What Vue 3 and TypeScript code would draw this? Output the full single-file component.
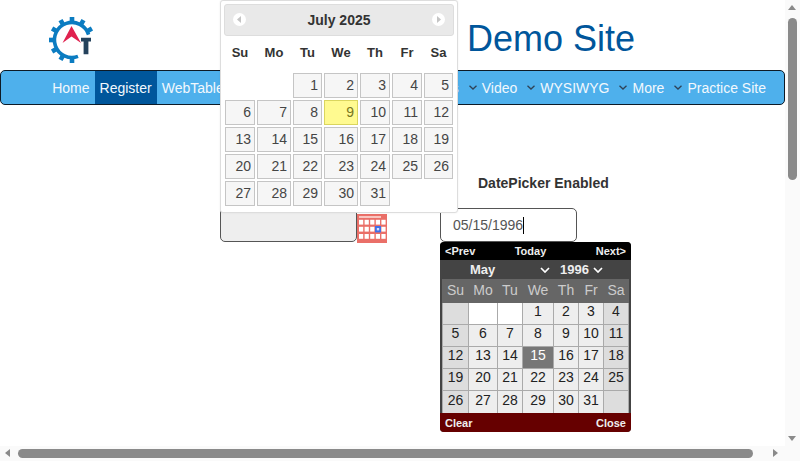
<script setup lang="ts">
type Day = { n: number | null }

const navItems = [
  { label: 'Home' },
  { label: 'Register', active: true },
  { label: 'WebTable' },
  { label: 'SwitchTo' },
  { label: 'Widgets', drop: true },
  { label: 'Interactions', drop: true },
  { label: 'Video', drop: true },
  { label: 'WYSIWYG', drop: true },
  { label: 'More', drop: true },
  { label: 'Practice Site', drop: true },
]

const gearTeeth = [0, 30, 60, 180, 210, 240, 270, 300, 330]

const weekdays = ['Su', 'Mo', 'Tu', 'We', 'Th', 'Fr', 'Sa']

function monthCells(offset: number, count: number): Day[] {
  const cells: Day[] = []
  for (let i = 0; i < offset; i++) cells.push({ n: null })
  for (let i = 1; i <= count; i++) cells.push({ n: i })
  while (cells.length % 7) cells.push({ n: null })
  return cells
}

const julyDays = monthCells(2, 31)
const mayDays = monthCells(3, 31)

function mayClass(d: Day, i: number) {
  const weekend = i % 7 === 0 || i % 7 === 6
  return {
    weekend,
    blank: d.n === null && !weekend && i < 7,
    'filler-end': d.n === null && i >= 7,
    current: d.n === 15,
  }
}

const iconCols = [2, 7.6, 13.2, 18.8, 24.4]
const iconRows = [5.8, 12.8, 20]
const iconCells = iconRows
  .flatMap((y, r) => iconCols.map((x, c) => ({ x, y, on: r === 1 && c === 3 })))
  .filter((c) => !c.on)
</script>

<template>
  <div class="window">
    <div class="viewport">
      <header class="top">
        <svg class="logo" width="48" height="52" viewBox="48 14 48 52">
          <path class="ring" d="M 78 56.4 A 17.5 17.5 0 1 1 88.6 34.6" />
          <rect
            v-for="a in gearTeeth"
            :key="a"
            x="69.7"
            y="17"
            width="4.6"
            height="5"
            fill="#0b7cc1"
            :transform="`rotate(${a} 72 40)`"
          />
          <path d="M71.5 26 L81 43 L71.5 36.5 L62.5 43 Z" fill="#e0224f" />
          <path d="M81 37.7 H91 V41.6 H88.4 V54.2 H83.6 V41.6 H81 Z" fill="#24425c" />
        </svg>
        <h1 class="site-title">Demo Site</h1>
      </header>

      <nav class="navbar">
        <a v-for="item in navItems" :key="item.label" class="nav-item" :class="{ active: item.active }">
          <svg v-if="item.drop" class="nav-chevron" width="8" height="5" viewBox="0 0 8 5">
            <path d="M0.5 0.7 L4 4 L7.5 0.7" fill="none" stroke="#2f4358" stroke-width="1.3" />
          </svg>
          {{ item.label }}
        </a>
      </nav>

      <main class="content">
        <div class="field-left">
          <div class="input-disabled"></div>
          <svg class="cal-icon" width="30" height="29" viewBox="0 0 30 29">
            <defs>
              <filter id="soft" x="-10%" y="-10%" width="120%" height="120%">
                <feGaussianBlur stdDeviation="0.6" />
              </filter>
            </defs>
            <rect width="30" height="29" fill="#ea6f68" />
            <g filter="url(#soft)">
              <rect x="2" y="2" width="22" height="2" fill="#f8c6c0" />
              <rect
                v-for="(c, i) in iconCells"
                :key="i"
                :x="c.x"
                :y="c.y"
                width="4.2"
                height="4.8"
                fill="#fff"
              />
              <rect x="18" y="12" width="6" height="6.4" fill="#3f6fe8" />
              <rect x="19.8" y="14" width="2.4" height="2.4" fill="#d5e1fc" />
            </g>
          </svg>
        </div>

        <div class="field-right">
          <label class="field-label">DatePicker Enabled</label>
          <div class="input-date">05/15/1996<span class="caret"></span></div>

          <div class="dark-cal">
            <div class="dark-bar">
              <span>&lt;Prev</span><span class="today-link">Today</span><span>Next&gt;</span>
            </div>
            <div class="dark-select">
              <span class="sel-month">May</span>
              <svg class="sel-arrow month-arrow" width="10" height="6" viewBox="0 0 10 6">
                <path d="M1 1 L5 5 L9 1" fill="none" stroke="#fff" stroke-width="1.7" />
              </svg>
              <span class="sel-year">1996</span>
              <svg class="sel-arrow" width="10" height="6" viewBox="0 0 10 6">
                <path d="M1 1 L5 5 L9 1" fill="none" stroke="#fff" stroke-width="1.7" />
              </svg>
            </div>
            <div class="dark-grid dark-head">
              <span v-for="w in weekdays" :key="w">{{ w }}</span>
            </div>
            <div class="dark-grid dark-days">
              <span v-for="(d, i) in mayDays" :key="i" class="dark-day" :class="mayClass(d, i)">{{ d.n }}</span>
            </div>
            <div class="dark-foot"><span>Clear</span><span>Close</span></div>
          </div>
        </div>
      </main>

      <div class="ui-cal">
        <div class="ui-head">
          <span class="ui-arrow">
            <svg width="13" height="13" viewBox="0 0 13 13"><path d="M8 3 L4 6.5 L8 10 Z" fill="#c4c4c4" /></svg>
          </span>
          <span class="ui-title">July 2025</span>
          <span class="ui-arrow">
            <svg width="13" height="13" viewBox="0 0 13 13"><path d="M5 3 L9 6.5 L5 10 Z" fill="#c4c4c4" /></svg>
          </span>
        </div>
        <div class="ui-grid">
          <span v-for="w in weekdays" :key="w" class="ui-week">{{ w }}</span>
          <template v-for="(d, i) in julyDays" :key="i">
            <span v-if="d.n" class="ui-day" :class="{ today: d.n === 9 }">{{ d.n }}</span>
            <span v-else></span>
          </template>
        </div>
      </div>
    </div>

    <div class="scroll-v">
      <i class="tri tri-up"></i>
      <div class="thumb-v"></div>
      <i class="tri tri-down"></i>
    </div>
    <div class="scroll-h">
      <i class="tri tri-left"></i>
      <div class="thumb-h"></div>
      <i class="tri tri-right"></i>
    </div>
    <div class="scroll-corner"></div>
  </div>
</template>

<style scoped>
.window {
  width: 800px;
  height: 461px;
  overflow: hidden;
  display: grid;
  grid-template-columns: 785px 15px;
  grid-template-rows: 446px 15px;
  font-family: 'Liberation Sans', Arial, sans-serif;
  font-size: 14px;
  color: #333;
  background: #fff;
}

.viewport {
  position: relative;
  overflow: hidden;
}

.top {
  height: 70px;
  display: flex;
  align-items: flex-start;
  padding: 14px 0 0 48px;
  box-sizing: border-box;
}

.logo {
  display: block;
  flex: none;
}

.ring {
  fill: none;
  stroke: #0b7cc1;
  stroke-width: 3.6;
}

.site-title {
  margin: 3px 0 0 371px;
  font-size: 36px;
  font-weight: 400;
  line-height: 44px;
  color: #00569b;
  white-space: nowrap;
}

.navbar {
  height: 35px;
  box-sizing: border-box;
  display: flex;
  align-items: stretch;
  padding-left: 46.2px;
  background: #4eb0ec;
  border: 1px solid #0d1a26;
  border-radius: 5px;
}

.nav-item {
  display: flex;
  align-items: center;
  gap: 5px;
  padding: 0 5px;
  color: #f2f8fd;
  white-space: nowrap;
}

.nav-item.active {
  background: #00569b;
}

.nav-chevron {
  flex: none;
}

.content {
  display: flex;
  align-items: flex-end;
  padding: 70px 0 0 220px;
}

.field-left {
  display: flex;
  align-items: flex-end;
}

.input-disabled {
  width: 137px;
  height: 34px;
  box-sizing: border-box;
  background: #eee;
  border: 1px solid #555;
  border-radius: 5px;
}

.cal-icon {
  display: block;
  margin-bottom: -1px;
}

.field-right {
  position: relative;
  margin-left: 53px;
}

.field-label {
  display: block;
  padding-left: 38px;
  margin-bottom: 17px;
  font-weight: 700;
  line-height: 16px;
  white-space: nowrap;
}

.input-date {
  width: 137px;
  height: 34px;
  box-sizing: border-box;
  display: flex;
  align-items: center;
  padding-left: 12px;
  border: 1px solid #555;
  border-radius: 5px;
  color: #555;
}

.caret {
  width: 1px;
  height: 17px;
  background: #000;
}

.dark-cal {
  position: absolute;
  left: 0;
  top: 100%;
  width: 191px;
  height: 190px;
  background: #444;
  border-radius: 4px;
  overflow: hidden;
  z-index: 2;
}

.dark-bar {
  height: 18px;
  display: flex;
  justify-content: space-between;
  align-items: center;
  padding: 0 5px;
  background: #000;
  color: #eee;
  font-size: 11px;
  font-weight: 700;
}

.today-link {
  margin-right: 10px;
}

.dark-select {
  height: 19px;
  display: flex;
  align-items: center;
  padding-left: 30px;
  color: #eee;
  font-size: 13px;
  font-weight: 700;
}

.sel-month {
  width: 70px;
}

.month-arrow {
  margin-right: 10px;
}

.sel-year {
  margin-right: 4px;
}

.sel-arrow {
  flex: none;
}

.dark-grid {
  display: grid;
  grid-template-columns: 25px 28px 24px 30px 24px 24px 24px;
  column-gap: 1px;
  margin: 0 2px;
  padding: 0 1px;
}

.dark-head {
  height: 24px;
  box-sizing: border-box;
  padding-bottom: 2px;
  background: #666;
  color: #ccc;
  align-items: center;
  text-align: center;
}

.dark-days {
  grid-template-rows: 21px 21px 21px 21px 22px;
  row-gap: 1px;
  background: #aaa;
}

.dark-day {
  display: flex;
  align-items: center;
  justify-content: center;
  padding-bottom: 5px;
  box-sizing: border-box;
  background: #eee;
  color: #222;
}

.dark-day.weekend,
.dark-day.filler-end {
  background: #ddd;
}

.dark-day.blank {
  background: #fff;
}

.dark-day.current {
  background: #777;
  color: #fff;
}

.dark-foot {
  height: 19px;
  display: flex;
  justify-content: space-between;
  align-items: center;
  padding: 0 5px;
  background: #600;
  color: #eee;
  font-size: 11px;
  font-weight: 700;
}

.ui-cal {
  position: absolute;
  left: 220px;
  top: 0;
  width: 238px;
  height: 213px;
  box-sizing: border-box;
  padding: 3px;
  background: #fff;
  border: 1px solid #ddd;
  border-radius: 3px;
  box-shadow: 0 0 2px rgba(0, 0, 0, 0.08);
  z-index: 3;
}

.ui-head {
  height: 32px;
  box-sizing: border-box;
  display: flex;
  align-items: center;
  justify-content: space-between;
  padding: 0 8px;
  background: #e9e9e9;
  border: 1px solid #ddd;
  border-radius: 3px;
}

.ui-arrow {
  width: 13px;
  height: 13px;
  border-radius: 50%;
  background: #fff;
  display: block;
  margin-top: -1px;
}

.ui-arrow svg {
  display: block;
}

.ui-title {
  font-weight: 700;
  color: #333;
}

.ui-grid {
  display: grid;
  grid-template-columns: 30px 34px 29px 34px 30px 30px 29px;
  grid-template-rows: 31px repeat(5, 25px);
  gap: 2px;
  margin: 4px 0 0 1px;
}

.ui-week {
  display: flex;
  align-items: center;
  justify-content: center;
  padding-bottom: 6px;
  font-size: 13px;
  font-weight: 700;
  color: #333;
}

.ui-day {
  box-sizing: border-box;
  padding-right: 3px;
  text-align: right;
  line-height: 23px;
  background: #f6f6f6;
  border: 1px solid #c5c5c5;
  color: #454545;
}

.ui-day.today {
  background: #fffa90;
  border-color: #dad55e;
  color: #777620;
}

.scroll-v,
.scroll-h,
.scroll-corner {
  background: #fafafa;
  position: relative;
}

.thumb-v {
  position: absolute;
  left: 3px;
  top: 18px;
  width: 9px;
  height: 162px;
  border-radius: 5px;
  background: #8a8a8a;
}

.thumb-h {
  position: absolute;
  left: 18px;
  top: 3px;
  width: 735px;
  height: 9px;
  border-radius: 5px;
  background: #8a8a8a;
}

.tri {
  position: absolute;
  width: 0;
  height: 0;
  border: 0 solid transparent;
}

.tri-up {
  left: 3px;
  top: 5px;
  border-width: 0 4.5px 5px;
  border-bottom-color: #8a8a8a;
}

.tri-down {
  left: 3px;
  top: 436px;
  border-width: 5px 4.5px 0;
  border-top-color: #8a8a8a;
}

.tri-left {
  left: 5px;
  top: 3px;
  border-width: 4.5px 5px 4.5px 0;
  border-right-color: #8a8a8a;
}

.tri-right {
  left: 773px;
  top: 3px;
  border-width: 4.5px 0 4.5px 5px;
  border-left-color: #8a8a8a;
}
</style>
